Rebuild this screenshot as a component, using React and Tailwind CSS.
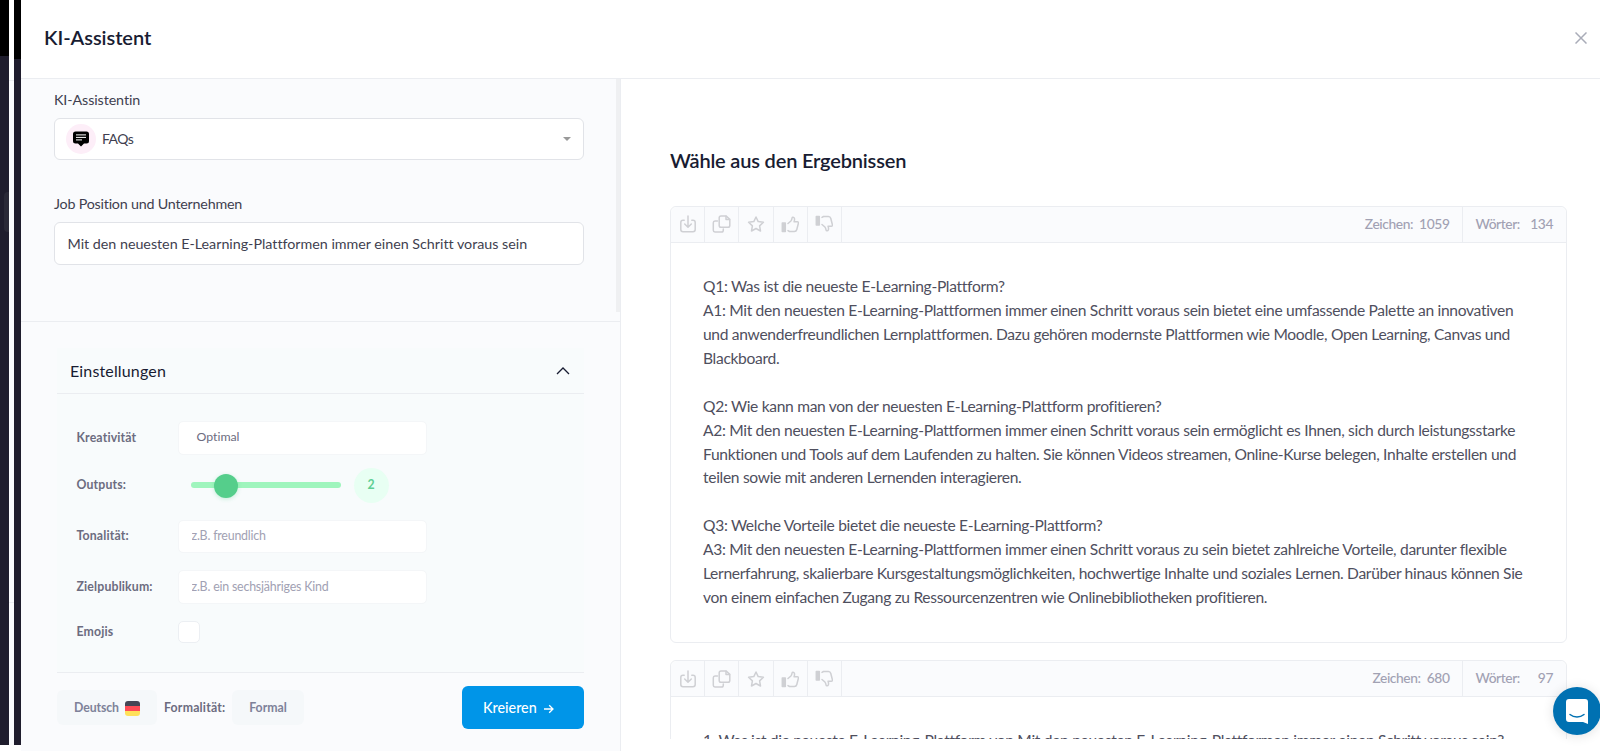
import { useState } from 'react';
import clsx from 'clsx';

const results = [
  {
    chars: 1059,
    words: 134,
    lines: [
      'Q1: Was ist die neueste E-Learning-Plattform?',
      'A1: Mit den neuesten E-Learning-Plattformen immer einen Schritt voraus sein bietet eine umfassende Palette an innovativen',
      'und anwenderfreundlichen Lernplattformen. Dazu gehören modernste Plattformen wie Moodle, Open Learning, Canvas und',
      'Blackboard.',
      '',
      'Q2: Wie kann man von der neuesten E-Learning-Plattform profitieren?',
      'A2: Mit den neuesten E-Learning-Plattformen immer einen Schritt voraus sein ermöglicht es Ihnen, sich durch leistungsstarke',
      'Funktionen und Tools auf dem Laufenden zu halten. Sie können Videos streamen, Online-Kurse belegen, Inhalte erstellen und',
      'teilen sowie mit anderen Lernenden interagieren.',
      '',
      'Q3: Welche Vorteile bietet die neueste E-Learning-Plattform?',
      'A3: Mit den neuesten E-Learning-Plattformen immer einen Schritt voraus zu sein bietet zahlreiche Vorteile, darunter flexible',
      'Lernerfahrung, skalierbare Kursgestaltungsmöglichkeiten, hochwertige Inhalte und soziales Lernen. Darüber hinaus können Sie',
      'von einem einfachen Zugang zu Ressourcenzentren wie Onlinebibliotheken profitieren.',
    ],
  },
  {
    chars: 680,
    words: 97,
    lines: ['1. Was ist die neueste E-Learning-Plattform von Mit den neuesten E-Learning-Plattformen immer einen Schritt voraus sein?'],
  },
];

function Icon({ children, className }) {
  return (
    <svg
      viewBox="0 0 18 18"
      fill="none"
      stroke="currentColor"
      strokeWidth="1.5"
      strokeLinecap="round"
      strokeLinejoin="round"
      className={clsx('h-[18px] w-[18px]', className)}
    >
      {children}
    </svg>
  );
}

const thumb = (
  <>
    <path d="M1.3 8h3v8.6h-3z" fill="currentColor" />
    <path d="M7 8.5 9.9 6c.8-.8 1-2 1.2-3.2.2-1 1.7-.8 2.2.2.5 1 .2 2.4-.2 3.7h3.2c.9 0 1.3.7 1.1 1.5l-1.6 6.3c-.3 1.2-1.2 2-2.4 2H8.5L7 15.6" />
  </>
);

const actions = [
  {
    name: 'download',
    icon: (
      <Icon>
        <path d="M5.2 5.3H4A2.2 2.2 0 0 0 1.8 7.5v7A2.2 2.2 0 0 0 4 16.7h10a2.2 2.2 0 0 0 2.2-2.2v-7A2.2 2.2 0 0 0 14 5.3h-1.2" />
        <path d="M9 1v11M5.7 9 9 12.2 12.3 9" />
      </Icon>
    ),
  },
  {
    name: 'copy',
    icon: (
      <Icon className="w-[19px]">
        <path d="M8.5 1h5.2l3.6 3.4v6a1.8 1.8 0 0 1-1.8 1.8h-7a1.8 1.8 0 0 1-1.8-1.8V2.8A1.8 1.8 0 0 1 8.5 1Z" />
        <path d="M13.5 1.2v3.2H17" />
        <path d="M5 6H2.5A1.8 1.8 0 0 0 .8 7.8v7.4A1.8 1.8 0 0 0 2.5 17H9a1.8 1.8 0 0 0 1.8-1.8V14" />
      </Icon>
    ),
  },
  {
    name: 'favorite',
    icon: (
      <Icon>
        <path d="m9 2 2.2 4.6 5.2.7-3.8 3.6.9 5.1L9 13.5 4.500 16l.9-5.100-3.800-3.600 5.200-.7z" />
      </Icon>
    ),
  },
  { name: 'like', icon: <Icon>{thumb}</Icon> },
  { name: 'dislike', icon: <Icon className="-scale-y-100">{thumb}</Icon> },
];

function Result({ chars, words, lines }) {
  return (
    <article className="shrink-0 rounded-md border border-[#ebedf1]">
      <div className="flex h-[35.5px] items-stretch rounded-t-md border-b border-[#ebedf1] bg-[#fafbfd] text-[13.8px] font-medium tracking-[-0.4px] text-[#a1a1b3]">
        {actions.map(({ name, icon }) => (
          <button
            key={name}
            aria-label={name}
            className="flex w-[34.2px] items-center justify-center border-r border-[#ebedf1] text-[#cfd0d4]"
          >
            {icon}
          </button>
        ))}
        <div className="ml-auto flex items-center gap-1.5 border-r border-[#ebedf1] pr-3">
          <span>Zeichen:</span>
          <span>{chars}</span>
        </div>
        <div className="flex w-[103.5px] items-center justify-between px-[13px]">
          <span>Wörter:</span>
          <span>{words}</span>
        </div>
      </div>
      <div className="px-8 pt-[32.6px] pb-[31.9px] text-[15.6px] leading-[23.93px] tracking-[-0.32px] whitespace-nowrap text-[#4f4f5e]">
        {lines.map((line, i) => (
          <p key={i} className="h-[23.93px]">{line}</p>
        ))}
      </div>
    </article>
  );
}

function Row({ label, className, children }) {
  return (
    <div className={clsx('flex items-center', className)}>
      <span className="w-[101px] shrink-0 font-bold tracking-[0.15px] text-[#6c6c80]">{label}</span>
      {children}
    </div>
  );
}

function Settings() {
  const [tone, setTone] = useState('');
  const [audience, setAudience] = useState('');
  const field =
    'w-[249px] rounded-[5px] border border-[#f4f6f8] bg-white px-[13px] pb-0.5 text-[12.4px] tracking-[-0.2px] text-[#6c6c80] placeholder:text-[#a1a1b3] outline-none';

  return (
    <section className="mx-9 mt-[26px] h-[325px] shrink-0 border-b border-[#ebedf1] bg-[#f8fbfc] text-[12.3px]">
      <div className="flex h-[46px] items-center justify-between border-b border-[#ebedf1] pr-[14px] pl-[13px] text-[#181c32]">
        <span className="text-[16px] tracking-[0.15px]">Einstellungen</span>
        <svg viewBox="0 0 14 8" fill="none" stroke="#181c32" strokeWidth="1.3" className="h-2 w-[14px]">
          <path d="M1 7 7 1l6 6" />
        </svg>
      </div>
      <div className="pr-5 pl-[19.5px] pt-[27px]">
        <Row label="Kreativität" className="h-[34px]">
          <div className="flex h-[34px] w-[249px] items-center rounded-[5px] border border-[#f4f6f8] bg-white pb-0.5 pl-[18px] text-[#6c6c80]">
            Optimal
          </div>
        </Row>
        <Row label="Outputs:" className="mt-3 h-9">
          <div className="relative ml-[13px] h-1.5 w-[150px] rounded-full bg-[#9ff5bd]">
            <span className="absolute -top-2 left-[23px] size-6 rounded-full bg-[#55ce8b] shadow-[0_1px_4px_rgba(80,205,137,0.3)]" />
          </div>
          <span className="ml-[13px] flex size-[35px] items-center justify-center rounded-full bg-[#e8fff3] font-bold text-[#5fcf93]">
            2
          </span>
        </Row>
        <Row label="Tonalität:" className="mt-[17px] h-[33px]">
          <input className={clsx(field, 'h-[33px]')} placeholder="z.B. freundlich" value={tone} onChange={(e) => setTone(e.target.value)} />
        </Row>
        <Row label="Zielpublikum:" className="mt-[17px] h-[34px]">
          <input className={clsx(field, 'h-[34px]')} placeholder="z.B. ein sechsjähriges Kind" value={audience} onChange={(e) => setAudience(e.target.value)} />
        </Row>
        <Row label="Emojis" className="mt-4 h-6">
          <span className="-mt-px size-[22px] rounded-[5px] border border-[#eceff3] bg-white" />
        </Row>
      </div>
    </section>
  );
}

export default function App() {
  const [topic, setTopic] = useState('Mit den neuesten E-Learning-Plattformen immer einen Schritt voraus sein');

  return (
    <div className="flex h-[751px] w-[1600px] overflow-hidden bg-white font-['Lato',sans-serif] [font-variant-ligatures:none]">
      {/* sliver of the page behind the drawer */}
      <div className="flex h-[745px] w-[21px] shrink-0">
        <div className="flex w-[9px] flex-col items-end bg-[#1f1d2d]">
          <div className="h-14 w-full bg-black" />
          <div className="mt-[136px] h-10 w-[5px] rounded-l bg-[#2a2937]" />
        </div>
        <div className="w-[5px] bg-white pt-20">
          <div className="h-[523px] border-y border-[#ebedf1] bg-[#fafbfd]" />
          <div className="h-[142px] bg-[#fafbfd]" />
        </div>
        <div className="w-[7px] bg-[#1f1d2d]">
          <div className="h-[59px] bg-black" />
        </div>
      </div>

      <div className="flex min-w-0 flex-1 flex-col">
        <header className="flex h-[79px] shrink-0 items-center justify-between border-b border-[#ebedf1] pr-[13px] pb-1 pl-[23px]">
          <h1 className="text-[20px] font-semibold tracking-[-0.05px] text-[#181c32]">KI-Assistent</h1>
          <svg viewBox="0 0 12 12" className="mt-0.5 h-3 w-3" stroke="#a9acb8" strokeWidth="1.5">
            <path d="m.5.5 11 11M11.5.5l-11 11" />
          </svg>
        </header>

        <div className="flex min-h-0 flex-1">
          <aside className="w-[600px] shrink-0 border-r border-[#ebedf1] bg-[#fafbfd] text-[#3f3f50]">
            <div className="flex h-[243px] items-start border-b border-[#ebedf1]">
              <div className="w-[595px] pt-2.5 pr-8 pl-[33px] text-[14.3px]">
                <div className="h-[29px] leading-[22px] tracking-[-0.1px]">KI-Assistentin</div>
                <div className="flex h-[42px] w-[530px] items-center rounded-md border border-[#e1e3e8] bg-white pr-3 pb-px pl-[11px]">
                  <span className="flex size-[30px] items-center justify-center rounded-full bg-[#fdeef8]">
                    <svg viewBox="0 0 16 16" className="size-4">
                      <path d="M2.5.5h11A2.5 2.5 0 0 1 16 3v7a2.5 2.5 0 0 1-2.5 2.5H11l-3 3-3-3H2.5A2.5 2.5 0 0 1 0 10V3A2.5 2.5 0 0 1 2.5.5Z" />
                      <path d="M3 3.9h10M3 6.4h10M3 8.9h6" stroke="#fff" strokeWidth="1" />
                    </svg>
                  </span>
                  <span className="ml-1.5 pb-px text-[14px] tracking-[-0.55px]">FAQs</span>
                  <span className="ml-auto border-x-4 border-t-4 border-x-transparent border-t-[#999]" />
                </div>
                <div className="mt-[33px] h-[29px] leading-[22px] tracking-[-0.22px]">Job Position und Unternehmen</div>
                <input
                  className="h-[43px] w-[530px] rounded-md border border-[#e1e3e8] bg-white px-[12.5px] tracking-[-0.02px] outline-none"
                  value={topic}
                  onChange={(e) => setTopic(e.target.value)}
                />
              </div>
              <div className="h-[233px] flex-1 bg-[#eff0f2]" />
            </div>

            <Settings />

            <div className="mx-9 flex items-center pt-[13px] text-[12.3px] font-bold">
              <button className="flex h-[35px] w-[100px] items-center rounded-md bg-[#f5f8fa] pl-[17px] text-[#7e8299]">
                <span className="w-[45px] pt-0.5 tracking-[-0.1px]">Deutsch</span>
                <svg viewBox="0 0 15 15" className="mt-0.5 ml-1.5 size-[15px]">
                  <clipPath id="flag"><rect width="15" height="15" rx="3" /></clipPath>
                  <g clipPath="url(#flag)">
                    <path fill="#464655" d="M0 0h15v5H0z" />
                    <path fill="#ff4b55" d="M0 5h15v5H0z" />
                    <path fill="#ffe15a" d="M0 10h15v5H0z" />
                  </g>
                </svg>
              </button>
              <span className="ml-[7px] w-[68px] pt-0.5 tracking-[0.2px] text-[#6c6c80]">Formalität:</span>
              <button className="h-[35px] w-[72px] rounded-md bg-[#f5f8fa] pt-0.5 text-[#7e8299]">Formal</button>
              <button className="ml-auto flex h-[43px] w-[122px] items-center rounded-md bg-[#0095e8] pl-[21px] text-[14.3px] font-medium text-white">
                Kreieren
                <svg viewBox="0 0 10 10" fill="none" stroke="currentColor" strokeWidth="1.3" className="mt-0.5 ml-[7px] size-2.5">
                  <path d="M0 5h9M5.2 1.2 9 5 5.2 8.8" />
                </svg>
              </button>
            </div>
          </aside>

          <main className="flex h-[660px] min-w-0 flex-1 flex-col overflow-hidden pt-[66px] pr-[33px] pl-[49px]">
            <h2 className="mb-[31px] h-[30px] shrink-0 text-[20px] leading-[30px] font-semibold tracking-[-0.18px] text-[#181c32]">
              Wähle aus den Ergebnissen
            </h2>
            <div className="flex flex-col gap-[17.5px]">
              {results.map((r) => (
                <Result key={r.chars} {...r} />
              ))}
            </div>
          </main>
        </div>
      </div>

      <button
        aria-label="chat"
        className="fixed top-[687px] left-[1553px] flex size-12 items-center justify-center rounded-full bg-[#0071b2] shadow-[0_1px_12px_rgba(0,0,0,0.12)]"
      >
        <svg viewBox="0 0 22 25" className="h-[25px] w-[22px]">
          <path fill="#fff" d="M3 0h16a3 3 0 0 1 3 3v22l-5-2H3a3 3 0 0 1-3-3V3a3 3 0 0 1 3-3Z" />
          <path fill="none" stroke="#0071b2" strokeWidth="1.5" strokeLinecap="round" d="M4 15.5c4 3.2 10 3.2 14 0" />
        </svg>
      </button>
    </div>
  );
}
